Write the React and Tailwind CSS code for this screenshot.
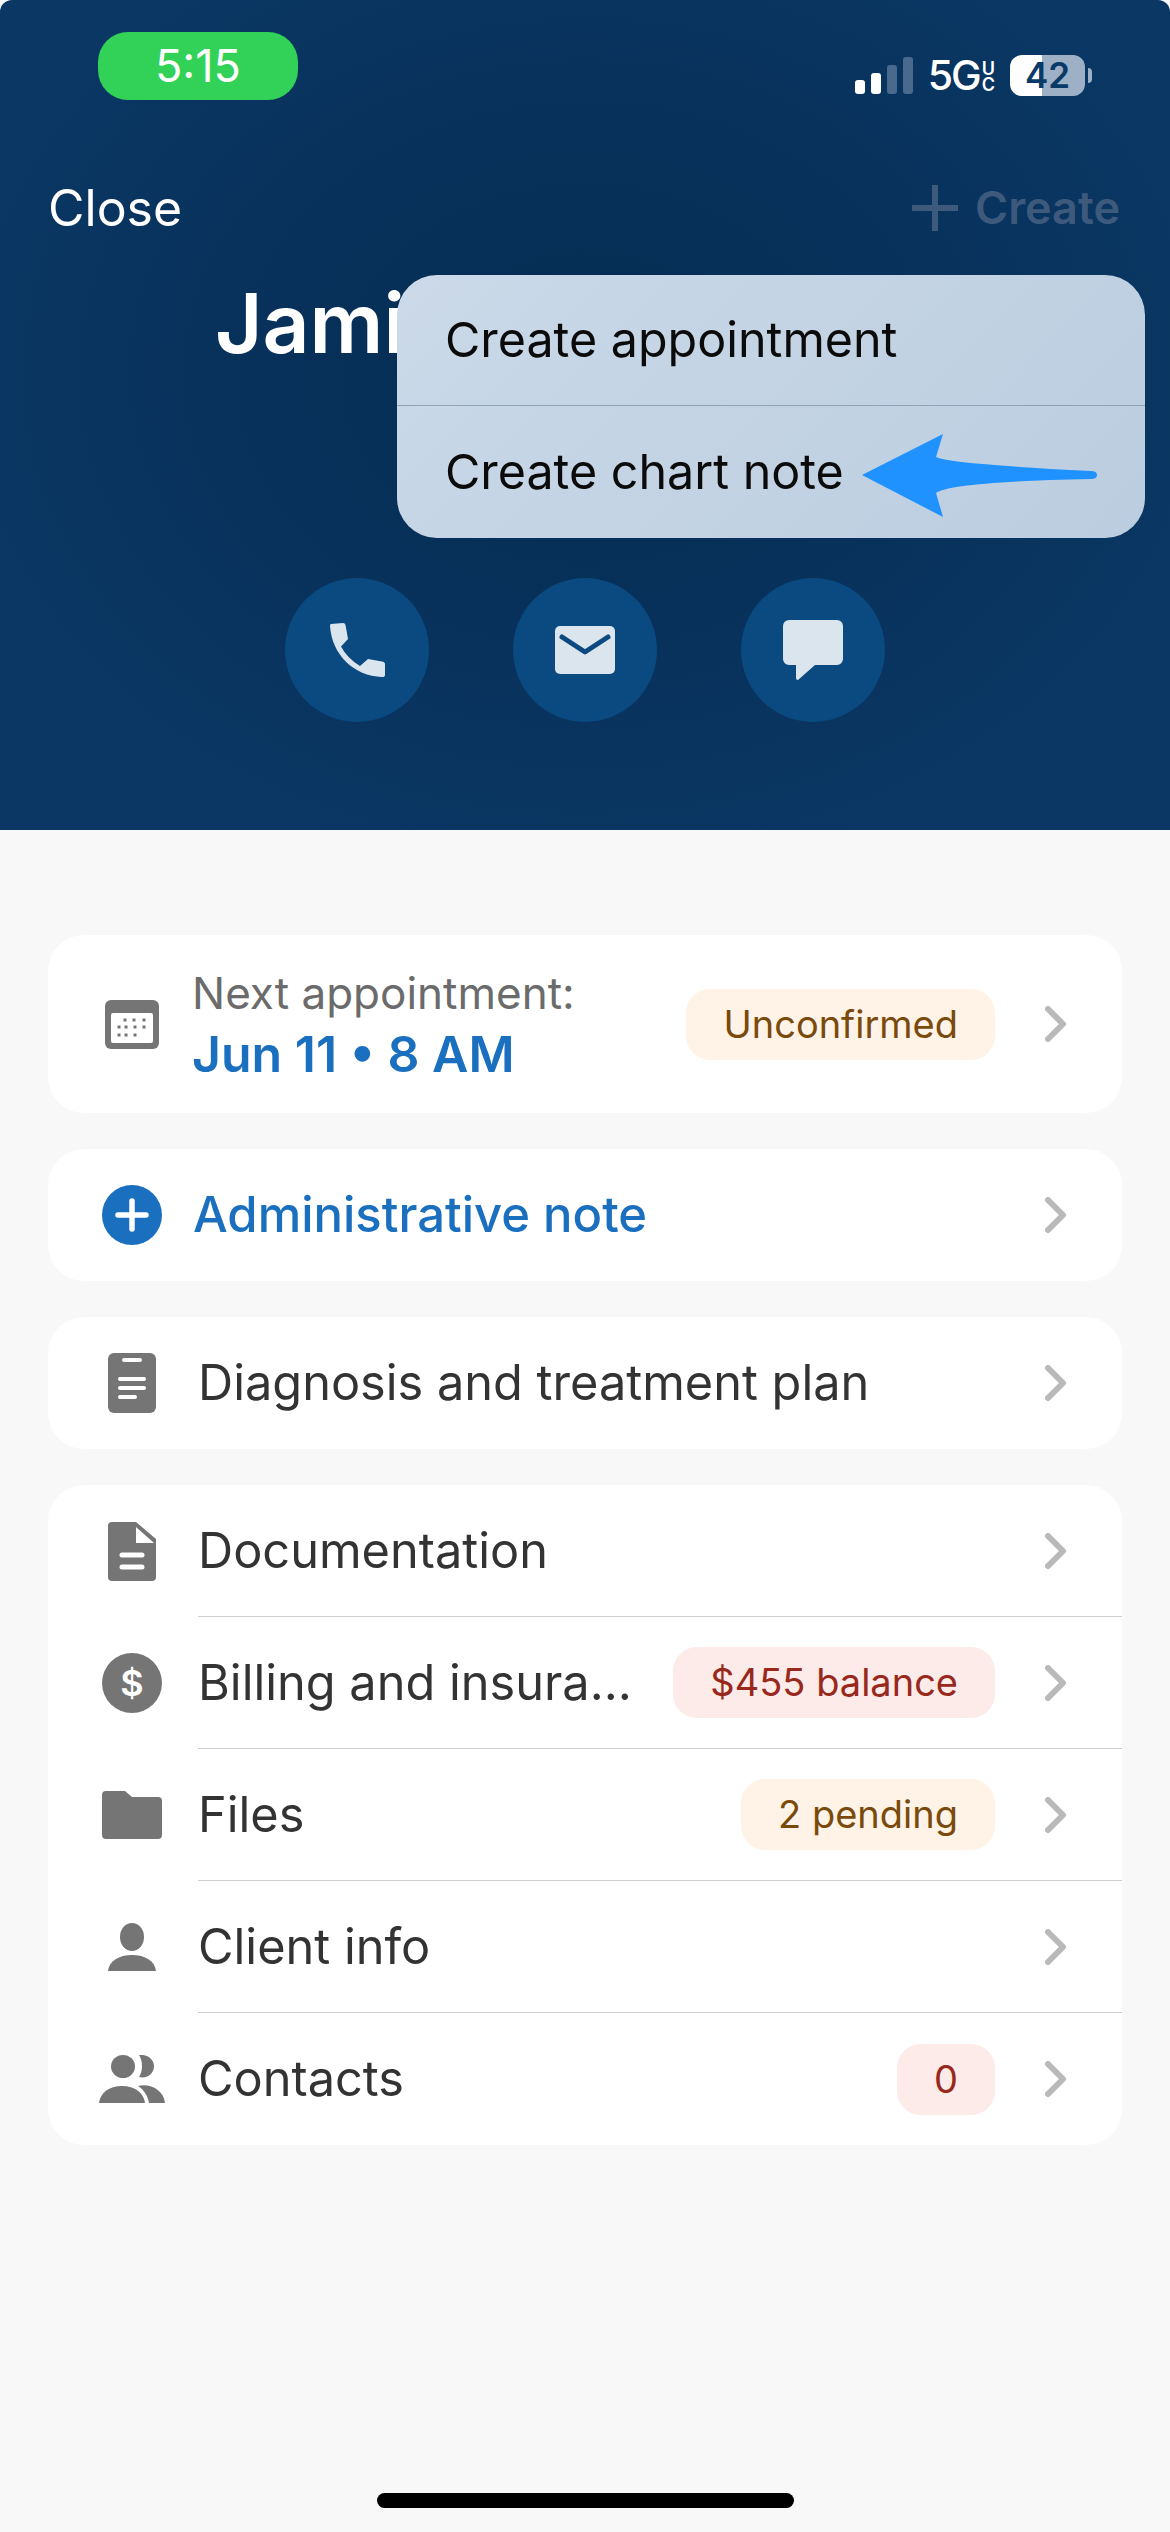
const Chevron = () => (
  <svg width="22" height="36" viewBox="0 0 22 36" className="shrink-0" fill="none">
    <path d="M3 3l15 15L3 33" stroke="#b9b9b9" strokeWidth="6" strokeLinecap="round" strokeLinejoin="round" />
  </svg>
);

const Badge = ({ tone, children }) => (
  <div
    className={
      tone === "red"
        ? "h-[71px] px-[37px] mr-[50px] rounded-[24px] flex items-center text-[38px] bg-[#fcebe8] text-[#98281c]"
        : "h-[71px] px-[37px] mr-[50px] rounded-[24px] flex items-center text-[38px] bg-[#fef3e6] text-[#7a4a0c]"
    }
  >
    {children}
  </div>
);

// Icons, drawn to the pixel size they have in the picture
const CalendarIcon = () => (
  <svg width="54" height="49" viewBox="0 0 54 49">
    <rect width="54" height="49" rx="6" fill="#757575" />
    <rect x="6" y="13" width="42" height="30" rx="2" fill="#fff" />
    {[
      [20, 20], [29, 20], [39, 20],
      [14, 27], [21, 27], [30, 27], [39, 27],
      [14, 35], [21, 35], [30, 35],
    ].map(([x, y]) => (
      <rect key={`${x}-${y}`} x={x - 1.5} y={y - 1.5} width="3" height="3" fill="#757575" />
    ))}
  </svg>
);

const PlusIcon = () => (
  <svg width="60" height="60" viewBox="0 0 60 60">
    <circle cx="30" cy="30" r="30" fill="#1a6fbe" />
    <path d="M30 16v28M16 30h28" stroke="#fff" strokeWidth="5.5" strokeLinecap="round" />
  </svg>
);

const ClipboardIcon = () => (
  <svg width="48" height="60" viewBox="0 0 48 60">
    <rect width="48" height="60" rx="6" fill="#757575" />
    <path d="M16 7h16M12 26h24M12 35h24M12 44h15" stroke="#fff" strokeWidth="4" strokeLinecap="round" />
  </svg>
);

const DocIcon = () => (
  <svg width="48" height="59" viewBox="0 0 48 59">
    <path d="M4 0h24l20 17v38a4 4 0 0 1-4 4H4a4 4 0 0 1-4-4V4a4 4 0 0 1 4-4z" fill="#757575" />
    <path d="M28 5v16h18z" fill="#fff" />
    <path d="M14 33h20M14 45h20" stroke="#fff" strokeWidth="5" strokeLinecap="round" />
  </svg>
);

const DollarIcon = () => (
  <div className="w-[60px] h-[60px] rounded-full bg-[#757575] flex items-center justify-center text-white text-[36px] font-semibold">
    $
  </div>
);

const FolderIcon = () => (
  <svg width="60" height="48" viewBox="0 0 60 48">
    <path d="M0 4a4 4 0 0 1 4-4h19l7 6h26a4 4 0 0 1 4 4v34a4 4 0 0 1-4 4H4a4 4 0 0 1-4-4z" fill="#757575" />
  </svg>
);

const PersonIcon = () => (
  <svg width="48" height="48" viewBox="0 0 48 48">
    <ellipse cx="24" cy="14" rx="12" ry="14" fill="#757575" />
    <path d="M0 48C1 38 11 32 24 32s23 6 24 16z" fill="#757575" />
  </svg>
);

const ContactsIcon = () => (
  <svg width="66" height="48" viewBox="0 0 66 48">
    <ellipse cx="24" cy="11.5" rx="12" ry="11.5" fill="#757575" />
    <path d="M40 0c8-1 15 4 15 11s-6 13-15 11c4-6 4-16 0-22z" fill="#757575" />
    <path d="M0 48c1-10 10-17 23-17s22 7 23 17z" fill="#757575" />
    <path d="M50 48c-1-7-5-13-11-17 13-3 26 5 27 17z" fill="#757575" />
  </svg>
);

const Row = ({ icon, label, badge, tone, last }) => (
  <div className="flex h-[132px]">
    <div className="w-[120px] pl-[48px] shrink-0 flex items-center justify-center">{icon}</div>
    <div
      className={
        last
          ? "flex-1 ml-[30px] flex items-center pr-[55px] min-w-0"
          : "flex-1 ml-[30px] flex items-center border-b border-[#cfcfcf] pr-[55px] min-w-0"
      }
    >
      <span className="flex-1 text-[48.7px] text-[#333333] whitespace-nowrap">{label}</span>
      {badge && <Badge tone={tone}>{badge}</Badge>}
      <Chevron />
    </div>
  </div>
);

export default function App() {
  return (
    <div className="w-[1170px] h-[2532px] bg-[#f8f8f8] flex flex-col relative overflow-hidden font-['Inter',sans-serif]">
      {/* Header */}
      <div className="h-[830px] shrink-0 flex flex-col pt-[32px] rounded-t-[12px] bg-[radial-gradient(ellipse_at_50%_45%,#052c52_0%,#0a3764_80%)]">
        {/* Status bar */}
        <div className="h-[68px] flex justify-between items-start pl-[98px] pr-[78px]">
          <div className="w-[200px] h-[68px] rounded-[30px] bg-[#32d158] flex items-center justify-center text-white text-[45px]">
            5:15
          </div>
          <div className="flex items-end h-[66px] pb-[2px]">
            <div className="flex items-end gap-[6px] mb-[2px]">
              <div className="w-[10px] h-[14px] rounded-[3px] bg-white" />
              <div className="w-[10px] h-[21px] rounded-[3px] bg-white" />
              <div className="w-[10px] h-[29px] rounded-[3px] bg-[#4a6a8d]" />
              <div className="w-[10px] h-[37px] rounded-[3px] bg-[#4a6a8d]" />
            </div>
            <span className="ml-[15px] text-white text-[41px] leading-[42px] font-medium tracking-[-2px]">5G</span>
            <div className="flex flex-col text-white text-[18px] leading-[16px] font-semibold ml-[2px] mb-[3px]">
              <span>U</span>
              <span>C</span>
            </div>
            <div className="ml-[15px] w-[75px] h-[41px] rounded-[12px] bg-[linear-gradient(90deg,#ffffff_43%,#9db0c5_43%)] flex items-center justify-center text-[#0a3a68] text-[35px] font-semibold">
              42
            </div>
            <div className="w-[4px] h-[15px] mb-[13px] ml-[3px] rounded-r-full bg-[#9db0c5]" />
          </div>
        </div>

        {/* Nav */}
        <div className="mt-[78px] h-[60px] flex justify-between items-center pl-[48px] pr-[50px]">
          <span className="text-white text-[50px]">Close</span>
          <div className="flex items-center gap-[17px] text-[#3d5a7c] text-[45px] font-semibold">
            <svg width="46" height="46" viewBox="0 0 46 46">
              <path d="M23 1v44M1 23h44" stroke="#3d5a7c" strokeWidth="6" strokeLinecap="round" />
            </svg>
            <span>Create</span>
          </div>
        </div>

        {/* Name */}
        <div className="mt-[40px] h-[90px] flex items-center pl-[215px] text-white text-[82px] font-semibold">
          Jami
        </div>

        {/* Contact actions */}
        <div className="mt-[210px] flex justify-center gap-[84px]">
          <div className="w-[144px] h-[144px] rounded-full bg-[#0a4a80] flex items-center justify-center">
            <svg width="55" height="54" viewBox="0 0 55 54">
              <path
                d="M1 1l12-1q2 0 2.500 2L18 16l-7 7.500Q17 35 30 43l8-7 14 2.500q3 .5 3 2.500v11q0 2-3 2C24 53 2 32 0 3q0-2 1-2z"
                fill="#dbe5ee"
              />
            </svg>
          </div>
          <div className="w-[144px] h-[144px] rounded-full bg-[#0a4a80] flex items-center justify-center">
            <svg width="60" height="48" viewBox="0 0 60 48">
              <rect width="60" height="48" rx="5" fill="#dbe5ee" />
              <path d="M7 11l23 15 23-15" stroke="#0a4a80" strokeWidth="5" strokeLinecap="round" strokeLinejoin="round" fill="none" />
            </svg>
          </div>
          <div className="w-[144px] h-[144px] rounded-full bg-[#0a4a80] flex items-center justify-center">
            <svg width="60" height="60" viewBox="0 0 60 60">
              <path
                d="M6 0h48a6 6 0 0 1 6 6v33a6 6 0 0 1-6 6H32L15 60q-2 0-2-2V45H6a6 6 0 0 1-6-6V6a6 6 0 0 1 6-6z"
                fill="#dbe5ee"
              />
            </svg>
          </div>
        </div>
      </div>

      {/* Create menu */}
      <div className="absolute left-[397px] top-[275px] w-[748px] h-[263px] rounded-[40px] bg-[linear-gradient(135deg,#cbd9e8,#bbcde0)] flex flex-col text-[#0b0b0b] text-[48.4px]">
        <div className="h-[131px] flex items-center pl-[48px] border-b border-[#8fa3b8]">Create appointment</div>
        <div className="flex-1 flex items-center pl-[48px]">Create chart note</div>
        <svg className="absolute left-[463px] top-[155px]" width="240" height="90" viewBox="0 0 240 90">
          <path
            d="M2 45L83 4l-7 23Q90 34 231 41q6 0 6 4t-6 4Q90 52 76 63l7 24z"
            fill="#1f92ff"
          />
        </svg>
      </div>

      {/* Cards */}
      <div className="flex flex-col gap-[36px] px-[48px] pt-[105px]">
        <div className="h-[178px] rounded-[36px] bg-white flex items-center">
          <div className="w-[120px] pl-[48px] shrink-0 flex items-center justify-center">
            <CalendarIcon />
          </div>
          <div className="flex-1 ml-[24px] flex items-center pr-[55px]">
            <div className="flex-1 flex flex-col">
              <span className="text-[44px] leading-[60px] text-[#6b6b6b]">Next appointment:</span>
              <span className="text-[50px] leading-[62px] font-semibold text-[#1a6fbe]">Jun 11 • 8 AM</span>
            </div>
            <Badge>Unconfirmed</Badge>
            <Chevron />
          </div>
        </div>

        <div className="h-[132px] rounded-[36px] bg-white flex items-center">
          <div className="w-[120px] pl-[48px] shrink-0 flex items-center justify-center">
            <PlusIcon />
          </div>
          <div className="flex-1 ml-[25px] flex items-center pr-[55px]">
            <span className="flex-1 text-[49px] font-medium text-[#1a6fbe]">Administrative note</span>
            <Chevron />
          </div>
        </div>

        <div className="h-[132px] rounded-[36px] bg-white flex items-center">
          <div className="w-[120px] pl-[48px] shrink-0 flex items-center justify-center">
            <ClipboardIcon />
          </div>
          <div className="flex-1 ml-[30px] flex items-center pr-[55px]">
            <span className="flex-1 text-[48.7px] text-[#333333]">Diagnosis and treatment plan</span>
            <Chevron />
          </div>
        </div>

        <div className="rounded-[36px] bg-white flex flex-col overflow-hidden">
          <Row icon={<DocIcon />} label="Documentation" />
          <Row icon={<DollarIcon />} label="Billing and insura…" badge="$455 balance" tone="red" />
          <Row icon={<FolderIcon />} label="Files" badge="2 pending" />
          <Row icon={<PersonIcon />} label="Client info" />
          <Row icon={<ContactsIcon />} label="Contacts" badge="0" tone="red" last />
        </div>
      </div>

      {/* Home indicator */}
      <div className="mt-auto mb-[24px] self-center w-[417px] h-[15px] rounded-full bg-black" />
    </div>
  );
}
